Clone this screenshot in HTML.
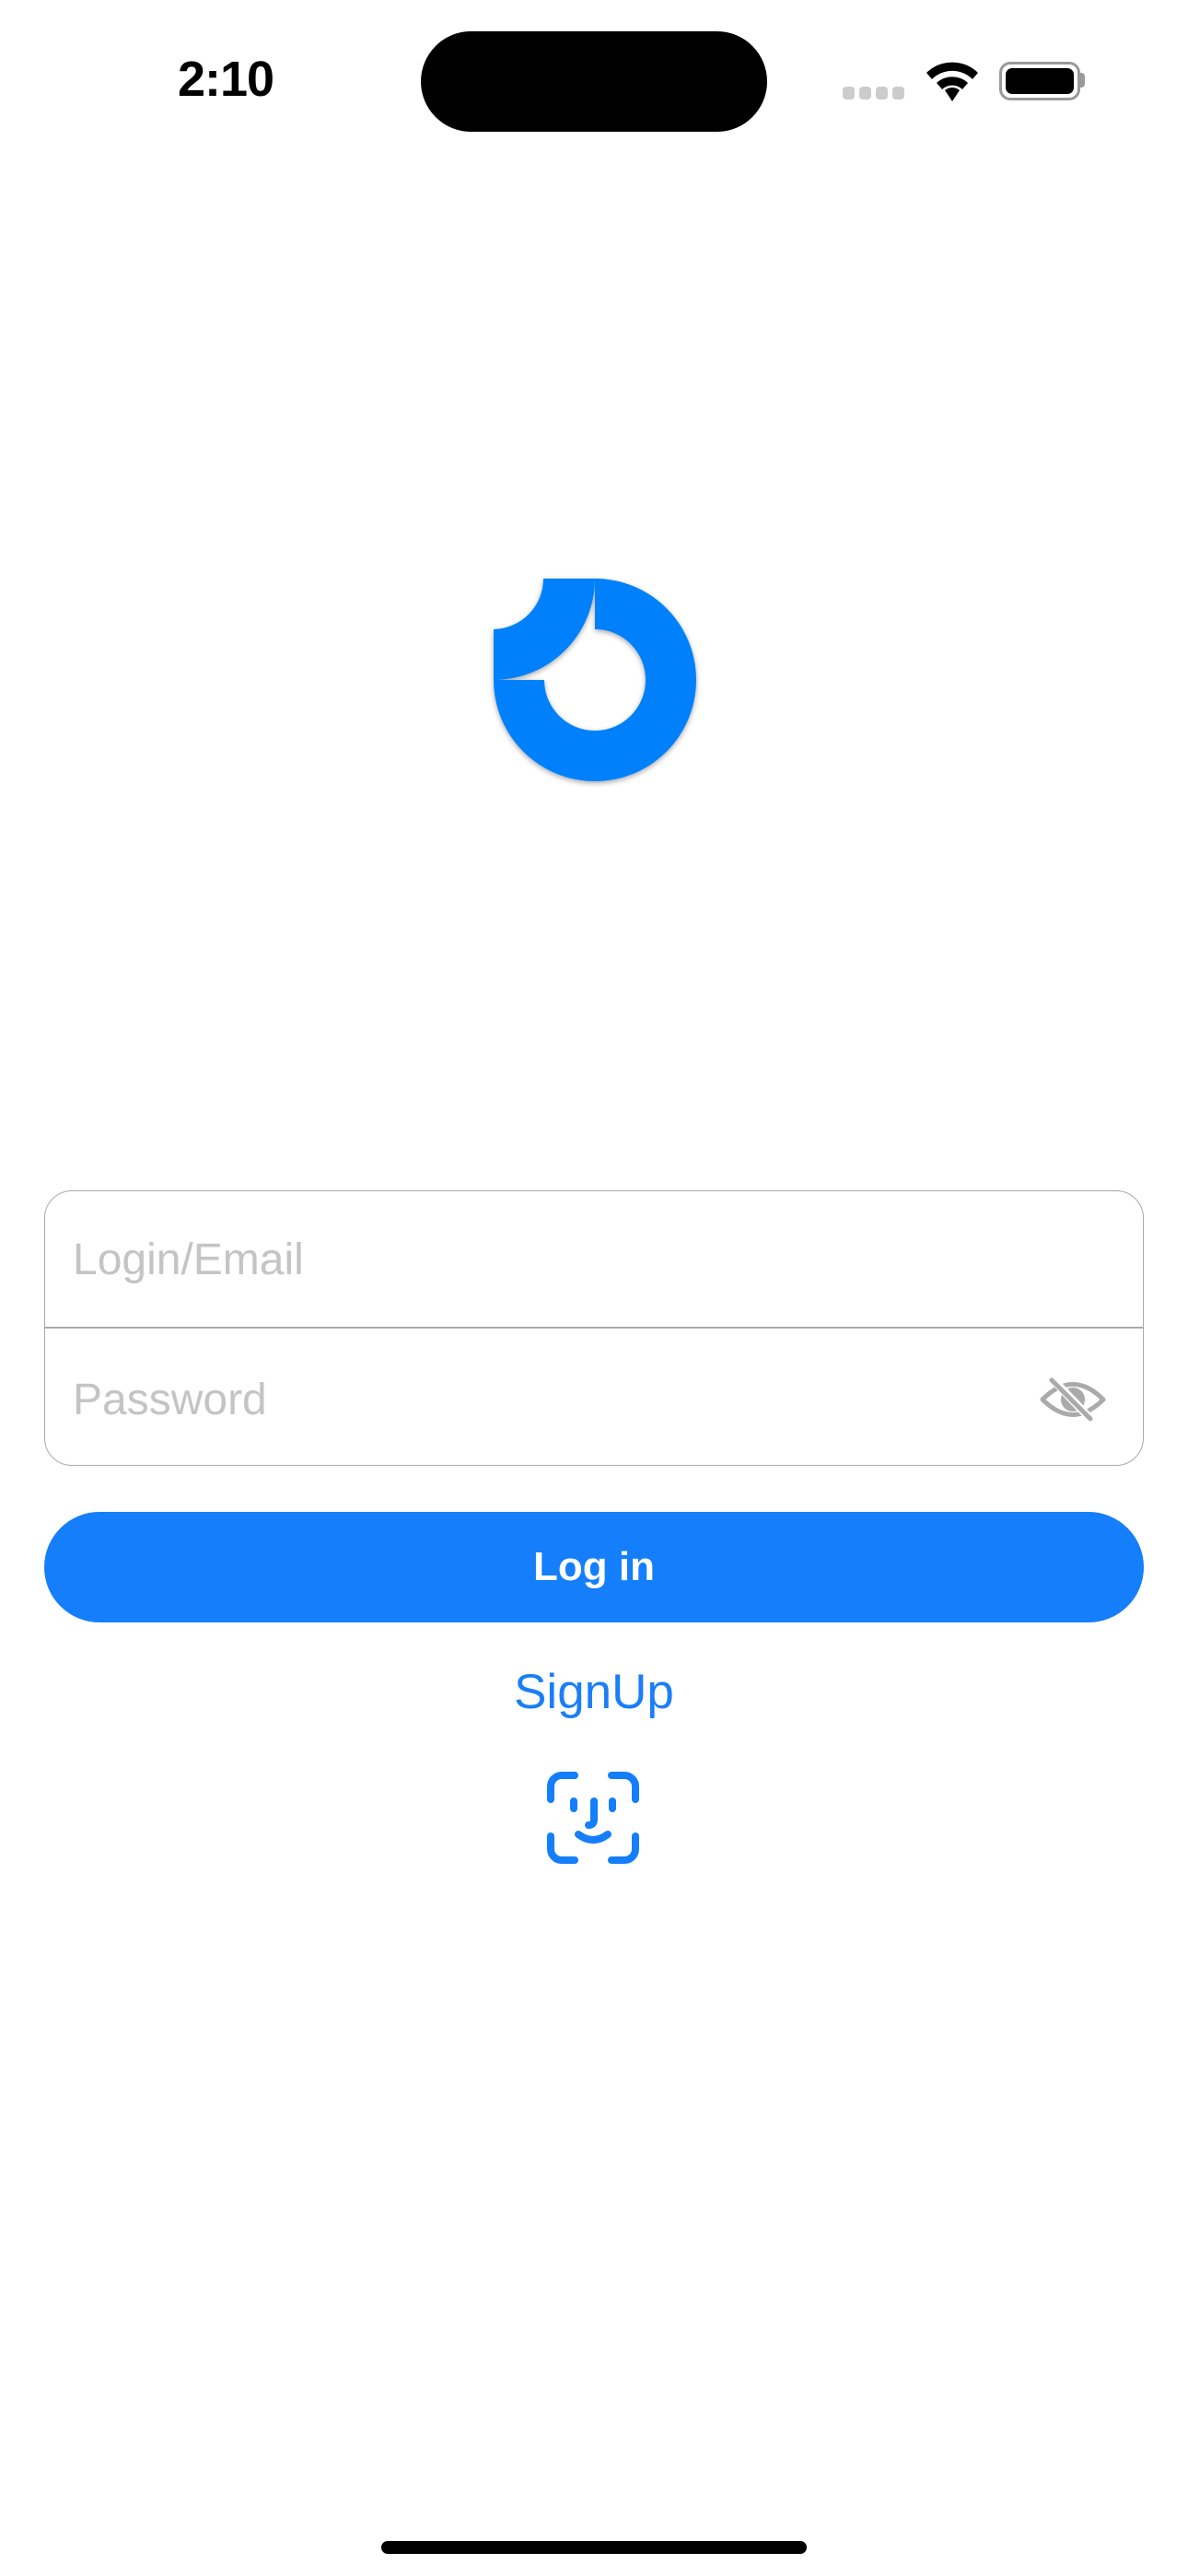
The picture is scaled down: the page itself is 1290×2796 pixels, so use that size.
<!DOCTYPE html>
<html><head><meta charset="utf-8"><style>
body{margin:0;width:1290px;height:2796px;background:#fff;position:relative;font-family:"Liberation Sans",sans-serif;overflow:hidden}
.a{position:absolute}
</style></head><body>
<div class="a" style="left:175px;top:55px;width:140px;text-align:center;font-size:54px;font-weight:bold;line-height:62px;letter-spacing:-1px">2:10</div>
<div class="a" style="left:457px;top:34px;width:376px;height:109px;border-radius:55px;background:#000"></div>
<div class="a" style="left:915px;top:94px;width:13px;height:14px;border-radius:4px;background:#ccc"></div>
<div class="a" style="left:933px;top:94px;width:13px;height:14px;border-radius:4px;background:#ccc"></div>
<div class="a" style="left:951px;top:94px;width:13px;height:14px;border-radius:4px;background:#ccc"></div>
<div class="a" style="left:969px;top:94px;width:13px;height:14px;border-radius:4px;background:#ccc"></div>
<svg class="a" style="left:1003px;top:64px" width="62" height="46" viewBox="0 0 62 46"><path d="M31 46 L23 34 A12 12 0 0 1 39 34 Z" fill="#000"/><path d="M14 26 A25 25 0 0 1 48 26 L42 33 A16 16 0 0 0 20 33 Z" fill="#000"/><path d="M3 15 A40 40 0 0 1 59 15 L53 22 A31 31 0 0 0 9 22 Z" fill="#000"/></svg>
<div class="a" style="left:1085px;top:67px;width:82px;height:36px;border:3px solid #999;border-radius:12px"></div>
<div class="a" style="left:1092px;top:74px;width:74px;height:28px;border-radius:7px;background:#000"></div>
<div class="a" style="left:1173px;top:79px;width:5px;height:16px;border-radius:0 4px 4px 0;background:#999"></div>

<svg class="a" style="left:0;top:0;overflow:visible" width="1290" height="1000">
<defs><filter id="s" x="-20%" y="-20%" width="140%" height="140%"><feDropShadow dx="0" dy="2" stdDeviation="3" flood-color="#000" flood-opacity="0.35"/></filter></defs>
<g fill="#0481fb" filter="url(#s)">
<path d="M646 628 A110 110 0 1 1 536 738 L591 738 A55 55 0 1 0 646 683 Z"/>
<path d="M590 628 L646 628 A110 110 0 0 1 536 738 L536 683 A55 55 0 0 0 590 628 Z"/>
</g></svg>

<div class="a" style="left:48px;top:1292px;width:1192px;height:297px;border:1.5px solid #aaa;border-radius:30px"></div>
<div class="a" style="left:49px;top:1440px;width:1192px;height:1.5px;background:#aaa"></div>
<div class="a" style="left:79px;top:1340px;font-size:48px;color:#c4c4c7;line-height:56px">Login/Email</div>
<div class="a" style="left:79px;top:1492px;font-size:48px;color:#c4c4c7;line-height:56px">Password</div>
<svg class="a" style="left:1128px;top:1494px" width="74" height="50" viewBox="0 0 74 50"><path d="M4 25 Q37 -8 70 25 Q37 58 4 25 Z" fill="none" stroke="#aaa" stroke-width="5" stroke-linejoin="round"/><circle cx="37" cy="25" r="13" fill="#aaa"/><line x1="14" y1="2" x2="58" y2="48" stroke="#fff" stroke-width="9"/><line x1="14" y1="4" x2="56" y2="46" stroke="#aaa" stroke-width="5" stroke-linecap="round"/></svg>

<div class="a" style="left:48px;top:1641px;width:1194px;height:120px;border-radius:60px;background:#147efb;color:#fff;font-weight:bold;font-size:44px;text-align:center;line-height:120px">Log in</div>
<div class="a" style="left:0;top:1806px;width:1290px;text-align:center;font-size:53px;color:#1b7ef7;line-height:62px">SignUp</div>
<svg class="a" style="left:594px;top:1923px" width="100" height="100" viewBox="0 0 100 100" fill="none" stroke="#147efb" stroke-width="8" stroke-linecap="round"><path d="M4 30 V16 A12 12 0 0 1 16 4 H30"/><path d="M70 4 H84 A12 12 0 0 1 96 16 V30"/><path d="M96 70 V84 A12 12 0 0 1 84 96 H70"/><path d="M30 96 H16 A12 12 0 0 1 4 84 V70"/><path d="M29 32 V40"/><path d="M71 32 V40"/><path d="M51 32 V52 Q51 58 45 58"/><path d="M34 68 Q50 80 66 68"/></svg>
<div class="a" style="left:414px;top:2758px;width:462px;height:14px;border-radius:7px;background:#000"></div>
</body></html>
